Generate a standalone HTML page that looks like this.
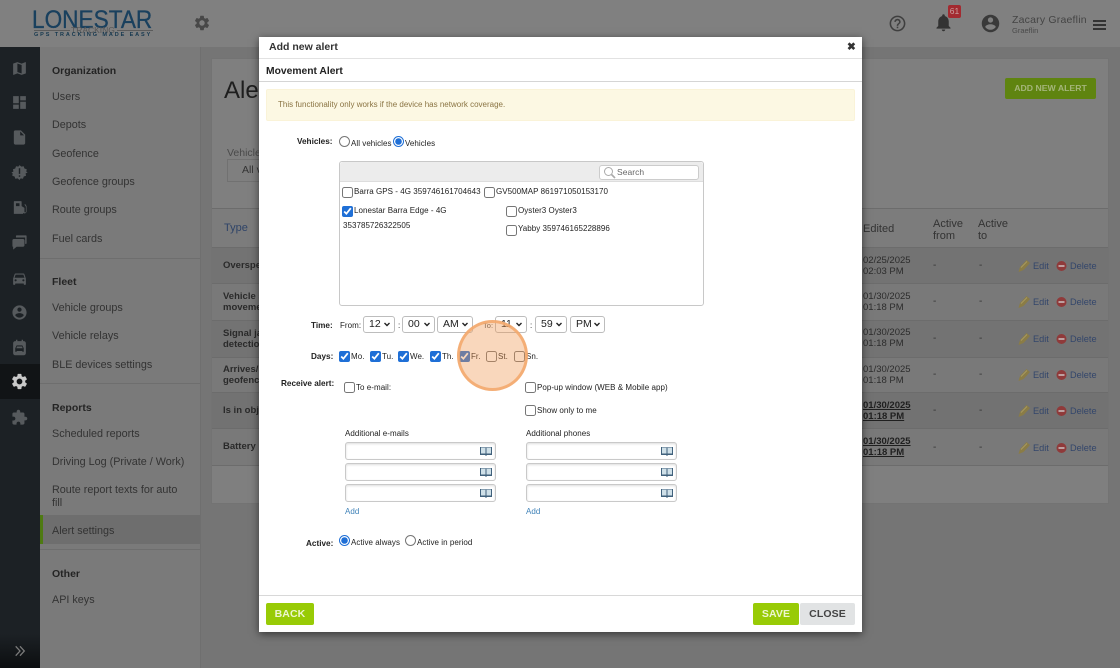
<!DOCTYPE html>
<html><head><meta charset="utf-8"><style>
html,body{margin:0;padding:0}
body{width:1120px;height:668px;position:relative;overflow:hidden;background:#757575;font-family:"Liberation Sans",sans-serif;color:#111}
div,span,input,svg,a{position:absolute}
.t{white-space:nowrap;line-height:1}
.nav{left:52px;font-size:10.8px;color:#333;white-space:nowrap;line-height:14px;margin-top:1px}
.navh{left:52px;font-size:10.5px;font-weight:bold;color:#242424;white-space:nowrap;line-height:14px;margin-top:1px}
.hr{left:40px;width:160px;height:1px;background:#6e6e6e}
.rail{left:11px;width:17px;height:17px;fill:#565a5d;margin-top:2px}
.row{left:212px;width:896px;border-bottom:1px solid #6c6c6c}
.ty{left:223px;font-size:9.5px;font-weight:bold;color:#2a2a2a;line-height:10.5px;white-space:nowrap}
.ed{left:863px;font-size:9.5px;color:#2c2c2c;line-height:10.5px;white-space:nowrap}
.dash{font-size:10px;color:#333;white-space:nowrap;line-height:10px}
.lnk{font-size:9.2px;color:#33466b;white-space:nowrap;line-height:10px}
.f{font-size:8px;letter-spacing:.04px;color:#222;white-space:nowrap;line-height:10px;margin-top:1px}
.b{font-weight:bold;color:#222;font-size:8.2px;letter-spacing:0}
input[type=checkbox],input[type=radio]{margin:0;width:11px;height:11px;accent-color:#1f6fd6}
.sel{top:316px;height:15px;border:1px solid #bdbdbd;border-radius:3px;background:#fff;color:#222;font-size:10.5px;line-height:15px;padding-left:5px;white-space:nowrap}
.sel svg{right:4px;top:5px;width:6px;height:5px;fill:none;stroke:#222;stroke-width:1.4}
.in{width:149px;height:16px;border:1px solid #c9c9c9;border-radius:3px;background:#fff;box-shadow:inset 0 1px 2px #ddd}
.bk{width:12px;height:10px}
.btn{height:22px;border-radius:2px;font-size:10.5px;font-weight:bold;text-align:center;line-height:22px;letter-spacing:.1px}
.ac{width:80px;height:12px}
</style></head><body>
<!-- header -->
<div style="left:0;top:0;width:1120px;height:47px;background:#808080"></div>
<div class="t" style="left:32px;top:8px;font-size:25px;font-weight:normal;color:#19405e;transform-origin:0 0;transform:scaleX(.905);-webkit-text-stroke:.3px #19405e">LONESTAR</div>
<div style="left:34px;top:30px;width:36px;height:1px;background:#5b5b5b"></div>
<div style="left:117px;top:30px;width:36px;height:1px;background:#5b5b5b"></div>
<div class="t" style="left:71px;top:26px;font-size:8.5px;color:#555">TRACKING</div>
<div class="t" style="left:34px;top:33px;font-size:5.5px;font-weight:bold;color:#16384f;letter-spacing:1.9px">GPS TRACKING MADE EASY</div>
<svg style="left:193px;top:14px;width:18px;height:18px;fill:#484848" viewBox="0 0 24 24"><path d="M19.14 12.94c.04-.3.06-.61.06-.94 0-.32-.02-.64-.07-.94l2.03-1.58c.18-.14.23-.41.12-.61l-1.92-3.32c-.12-.22-.37-.29-.59-.22l-2.39.96c-.5-.38-1.03-.7-1.62-.94l-.36-2.54c-.04-.24-.24-.41-.48-.41h-3.84c-.24 0-.43.17-.47.41l-.36 2.54c-.59.24-1.13.57-1.62.94l-2.39-.96c-.22-.08-.47 0-.59.22L2.74 8.87c-.12.21-.08.47.12.61l2.03 1.58c-.05.3-.09.63-.09.94s.02.64.07.94l-2.03 1.58c-.18.14-.23.41-.12.61l1.92 3.32c.12.22.37.29.59.22l2.39-.96c.5.38 1.03.7 1.62.94l.36 2.54c.05.24.24.41.48.41h3.84c.24 0 .44-.17.47-.41l.36-2.54c.59-.24 1.13-.56 1.62-.94l2.39.96c.22.08.47 0 .59-.22l1.92-3.32c.12-.22.07-.47-.12-.61l-2.01-1.58zM12 15.6c-1.98 0-3.6-1.62-3.6-3.6s1.62-3.6 3.6-3.6 3.6 1.62 3.6 3.6-1.62 3.6-3.6 3.6z"/></svg>
<svg style="left:888px;top:14px;width:19px;height:19px;fill:#3f3f3f" viewBox="0 0 24 24"><path d="M11 18h2v-2h-2v2zm1-16C6.48 2 2 6.48 2 12s4.48 10 10 10 10-4.48 10-10S17.52 2 12 2zm0 18c-4.41 0-8-3.59-8-8s3.59-8 8-8 8 3.59 8 8-3.59 8-8 8zm0-14c-2.21 0-4 1.79-4 4h2c0-1.1.9-2 2-2s2 .9 2 2c0 2-3 1.75-3 5h2c0-2.25 3-2.5 3-5 0-2.21-1.79-4-4-4z"/></svg>
<svg style="left:933px;top:12px;width:21px;height:21px;fill:#333" viewBox="0 0 24 24"><path d="M12 22c1.1 0 2-.9 2-2h-4c0 1.1.89 2 2 2zm6-6v-5c0-3.07-1.64-5.64-4.5-6.32V4c0-.83-.67-1.5-1.5-1.5s-1.5.67-1.5 1.5v.68C7.63 5.36 6 7.92 6 11v5l-2 2v1h16v-1l-2-2z"/></svg>
<div style="left:948px;top:5px;width:13px;height:13px;background:#a32a30;border-radius:2px;color:#c9a0a0;font-size:8.5px;text-align:center;line-height:13px">61</div>
<svg style="left:980px;top:13px;width:21px;height:21px;fill:#3a3a3a" viewBox="0 0 24 24"><path d="M12 2C6.48 2 2 6.48 2 12s4.48 10 10 10 10-4.48 10-10S17.52 2 12 2zm0 3c1.66 0 3 1.34 3 3s-1.34 3-3 3-3-1.34-3-3 1.34-3 3-3zm0 14.2c-2.5 0-4.71-1.28-6-3.22.03-1.99 4-3.08 6-3.08 1.99 0 5.97 1.09 6 3.08-1.29 1.94-3.5 3.22-6 3.22z"/></svg>
<div class="t" style="left:1012px;top:15px;font-size:10.5px;color:#444;letter-spacing:.2px">Zacary Graeflin</div>
<div class="t" style="left:1012px;top:27px;font-size:7.5px;color:#4a4a4a">Graeflin</div>
<div style="left:1093px;top:20px;width:13px;height:1.5px;background:#333"></div>
<div style="left:1093px;top:24px;width:13px;height:1.5px;background:#333"></div>
<div style="left:1093px;top:28px;width:13px;height:1.5px;background:#333"></div>
<!-- rail -->
<div style="left:0;top:47px;width:40px;height:621px;background:#1c2125"></div>
<div style="left:0;top:364px;width:40px;height:35px;background:#111416"></div>
<div style="left:0;top:634px;width:40px;height:34px;background:linear-gradient(#1c2125,#0c0e10)"></div>
<svg class="rail" style="top:58px" viewBox="0 0 24 24"><path d="M20.5 3l-.16.03L15 5.1 9 3 3.36 4.9c-.21.07-.36.25-.36.48V20.5c0 .28.22.5.5.5l.16-.03L9 18.9l6 2.1 5.64-1.9c.21-.07.36-.25.36-.48V3.5c0-.28-.22-.5-.5-.5zM15 19l-6-2.11V5l6 2.11V19z"/></svg>
<svg class="rail" style="top:92px" viewBox="0 0 24 24"><path d="M3 13h8V3H3v10zm0 8h8v-6H3v6zm10 0h8V11h-8v10zm0-18v6h8V3h-8z"/></svg>
<svg class="rail" style="top:127px" viewBox="0 0 24 24"><path d="M14 2H6c-1.1 0-2 .9-2 2v16c0 1.1.9 2 2 2h12c1.1 0 2-.9 2-2V8l-6-6zm-1 7V3.5L18.5 9H13z"/></svg>
<svg class="rail" style="top:162px" viewBox="0 0 24 24"><path fill-rule="evenodd" d="M12 1.5l2.6 2.2 3.3-.6 1.1 3.2 3.2 1.1-.6 3.3L23.5 12l-2.9 1.3.6 3.3-3.2 1.1-1.1 3.2-3.3-.6L12 22.500l-2.6-2.2-3.3.6-1.1-3.2-3.2-1.1.6-3.3L.5 12l2.9-1.3-.6-3.3 3.2-1.1 1.1-3.2 3.3.6zM11 6v8h2V6zm0 10v2h2v-2z"/></svg>
<svg class="rail" style="top:197px" viewBox="0 0 24 24"><path fill-rule="evenodd" d="M5 3h9c.6 0 1 .4 1 1v6l4 2.5V18a1 1 0 0 0 2 0v-7l-2-3 1-1 2 3v8a3 3 0 0 1-5 1.5V21H4V4c0-.6.4-1 1-1zm2 3v4h5V6z"/></svg>
<svg class="rail" style="top:232px" viewBox="0 0 24 24"><path d="M8 2h13c.6 0 1 .4 1 1v10c0 .6-.4 1-1 1h-1V5H7V3c0-.6.4-1 1-1zM4 7h13c1 0 2 .8 2 2v7c0 1-1 2-2 2H8l-5 4v-4c-1 0-1-.8-1-2V9c0-1.200.9-2 2-2z"/></svg>
<svg class="rail" style="top:268px" viewBox="0 0 24 24"><path d="M18.920 6.010C18.720 5.420 18.160 5 17.500 5h-11c-.66 0-1.210.42-1.420 1.010L3 12v8c0 .55.45 1 1 1h1c.55 0 1-.45 1-1v-1h12v1c0 .55.45 1 1 1h1c.55 0 1-.45 1-1v-8l-2.080-5.990zM6.500 16c-.83 0-1.500-.67-1.500-1.500S5.670 13 6.500 13s1.500.67 1.500 1.500S7.330 16 6.500 16zm11 0c-.83 0-1.500-.67-1.500-1.500s.67-1.500 1.500-1.500 1.500.67 1.500 1.500-.67 1.500-1.500 1.500zM5 11l1.500-4.500h11L19 11H5z"/></svg>
<svg class="rail" style="top:302px" viewBox="0 0 24 24"><path d="M12 2C6.480 2 2 6.480 2 12s4.480 10 10 10 10-4.480 10-10S17.520 2 12 2zm0 3c1.660 0 3 1.340 3 3s-1.340 3-3 3-3-1.340-3-3 1.340-3 3-3zm0 14.200c-2.500 0-4.710-1.280-6-3.220.03-1.990 4-3.080 6-3.080 1.990 0 5.970 1.090 6 3.080-1.290 1.940-3.500 3.220-6 3.220z"/></svg>
<svg class="rail" style="top:337px" viewBox="0 0 24 24"><path fill-rule="evenodd" d="M7 1h2v2h6V1h2v2h1c1.700 0 3 1.300 3 3v14c0 1.700-1.300 3-3 3H6c-1.700 0-3-1.300-3-3V6c0-1.700 1.300-3 3-3h1zM8 9l-2 4v5h2v-1h8v1h2v-5l-2-4zm.500 1.500h7l1 2.500h-9z"/></svg>
<svg style="left:10px;top:372px;width:19px;height:19px;fill:#c9c9c9" viewBox="0 0 24 24"><path d="M19.140 12.940c.04-.3.06-.61.06-.94 0-.32-.02-.64-.07-.94l2.030-1.580c.18-.14.23-.41.12-.61l-1.920-3.320c-.12-.22-.37-.29-.59-.22l-2.390.96c-.5-.38-1.030-.7-1.620-.94l-.36-2.540c-.04-.24-.24-.41-.48-.41h-3.840c-.24 0-.43.17-.47.41l-.36 2.540c-.59.24-1.130.57-1.620.94l-2.390-.96c-.22-.08-.47 0-.59.22L2.740 8.870c-.12.21-.08.47.12.61l2.030 1.580c-.05.3-.09.63-.09.94s.02.64.07.94l-2.030 1.580c-.18.14-.23.41-.12.61l1.920 3.320c.12.22.37.29.59.22l2.390-.96c.5.38 1.030.7 1.620.94l.36 2.54c.05.24.24.41.48.41h3.840c.24 0 .44-.17.47-.41l.36-2.54c.59-.24 1.130-.56 1.620-.94l2.390.96c.22.08.47 0 .59-.22l1.920-3.320c.12-.22.07-.47-.12-.61l-2.010-1.580zM12 15.600c-1.980 0-3.600-1.620-3.600-3.600s1.620-3.600 3.600-3.600 3.600 1.620 3.600 3.600-1.620 3.600-3.600 3.600z"/></svg>
<svg class="rail" style="top:407px" viewBox="0 0 24 24"><path d="M20.500 11H19V7c0-1.100-.9-2-2-2h-4V3.500C13 2.120 11.880 1 10.500 1S8 2.120 8 3.500V5H4c-1.100 0-1.990.9-1.990 2v3.800H3.500c1.490 0 2.700 1.210 2.700 2.700s-1.210 2.700-2.700 2.700H2V20c0 1.100.9 2 2 2h3.800v-1.500c0-1.490 1.210-2.700 2.700-2.700 1.490 0 2.700 1.210 2.700 2.700V22H17c1.100 0 2-.9 2-2v-4h1.500c1.380 0 2.500-1.120 2.500-2.500S21.880 11 20.500 11z"/></svg>
<svg style="left:14px;top:645px;width:12px;height:12px;fill:none;stroke:#7c7c7c;stroke-width:1.500" viewBox="0 0 14 13"><path d="M2 1l5 5.500L2 12M7 1l5 5.500L7 12"/></svg>
<!-- side panel -->
<div style="left:40px;top:47px;width:160px;height:621px;background:#7a7a7a"></div>
<div style="left:200px;top:47px;width:1px;height:621px;background:#6f6f6f"></div>
<div class="navh" style="top:63px">Organization</div>
<div class="nav" style="top:89px">Users</div>
<div class="nav" style="top:117px">Depots</div>
<div class="nav" style="top:146px">Geofence</div>
<div class="nav" style="top:174px">Geofence groups</div>
<div class="nav" style="top:202px">Route groups</div>
<div class="nav" style="top:231px">Fuel cards</div>
<div class="hr" style="top:258px"></div>
<div class="navh" style="top:274px">Fleet</div>
<div class="nav" style="top:300px">Vehicle groups</div>
<div class="nav" style="top:328px">Vehicle relays</div>
<div class="nav" style="top:357px">BLE devices settings</div>
<div class="hr" style="top:383px"></div>
<div class="navh" style="top:400px">Reports</div>
<div class="nav" style="top:426px">Scheduled reports</div>
<div class="nav" style="top:454px">Driving Log (Private / Work)</div>
<div class="nav" style="top:483px;line-height:12.500px">Route report texts for auto<br>fill</div>
<div style="left:40px;top:515px;width:160px;height:29px;background:#6e6e6e"></div>
<div style="left:40px;top:515px;width:3px;height:29px;background:#4e7a12"></div>
<div class="nav" style="top:523px">Alert settings</div>
<div class="hr" style="top:549px"></div>
<div class="navh" style="top:566px">Other</div>
<div class="nav" style="top:592px">API keys</div>
<!-- main card -->
<div style="left:212px;top:59px;width:896px;height:444px;background:#7f7f7f;box-shadow:0 0 0 1px #737373"></div>
<div class="t" style="left:224px;top:79px;font-size:24px;color:#1e1e1e">Alert settings</div>
<div class="t" style="left:227px;top:148px;font-size:10.500px;color:#4a4a4a">Vehicle</div>
<div style="left:227px;top:159px;width:50px;height:21px;border:1px solid #717171"></div>
<div class="t" style="left:242px;top:165px;font-size:10.500px;color:#333">All vehicles</div>
<div class="btn" style="left:1005px;top:78px;width:91px;background:#5f8410;color:#a4b57a;line-height:21px;height:21px;font-size:8.700px;letter-spacing:0">ADD NEW ALERT</div>
<div style="left:212px;top:208px;width:896px;height:40px;background:#7c7c7c;border-top:1px solid #6c6c6c;border-bottom:1px solid #6c6c6c;box-sizing:border-box"></div>
<div class="t" style="left:224px;top:223px;font-size:11px;color:#2f4468">Type</div>
<div class="t" style="left:863px;top:224px;font-size:11px;color:#333">Edited</div>
<div class="t" style="left:933px;top:218px;font-size:11px;color:#333;line-height:12px">Active<br>from</div>
<div class="t" style="left:978px;top:218px;font-size:11px;color:#333;line-height:12px">Active<br>to</div>
<div class="row" style="top:248px;height:35px;background:#737373"></div>
<div class="row" style="top:284px;height:36px;background:#797979"></div>
<div class="row" style="top:321px;height:36px;background:#737373"></div>
<div class="row" style="top:358px;height:34px;background:#797979"></div>
<div class="row" style="top:393px;height:35px;background:#727272"></div>
<div class="row" style="top:429px;height:36px;background:#797979"></div>
<div class="ty" style="top:261px">Overspeed</div>
<div class="ty" style="top:292px">Vehicle start<br>movement</div>
<div class="ty" style="top:329px">Signal jamming<br>detection</div>
<div class="ty" style="top:365px">Arrives/leaves<br>geofence</div>
<div class="ty" style="top:406px">Is in object</div>
<div class="ty" style="top:442px">Battery low</div>
<div class="ed" style="top:256px">02/25/2025<br>02:03 PM</div>
<div class="ed" style="top:292px">01/30/2025<br>01:18 PM</div>
<div class="ed" style="top:328px">01/30/2025<br>01:18 PM</div>
<div class="ed" style="top:365px">01/30/2025<br>01:18 PM</div>
<div class="ed" style="top:401px;font-weight:bold;text-decoration:underline;color:#1f1f1f">01/30/2025<br>01:18 PM</div>
<div class="ed" style="top:437px;font-weight:bold;text-decoration:underline;color:#1f1f1f">01/30/2025<br>01:18 PM</div>
<div class="dash" style="left:933px;top:261px">-</div><div class="dash" style="left:979px;top:261px">-</div>
<div class="dash" style="left:933px;top:297px">-</div><div class="dash" style="left:979px;top:297px">-</div>
<div class="dash" style="left:933px;top:334px">-</div><div class="dash" style="left:979px;top:334px">-</div>
<div class="dash" style="left:933px;top:370px">-</div><div class="dash" style="left:979px;top:370px">-</div>
<div class="dash" style="left:933px;top:406px">-</div><div class="dash" style="left:979px;top:406px">-</div>
<div class="dash" style="left:933px;top:443px">-</div><div class="dash" style="left:979px;top:443px">-</div>
<svg class="ac" style="left:1018px;top:260px" viewBox="0 0 80 12"><path d="M.5 12l1.500-5L8.500 0l3.500 3L5.500 10z" fill="#8a7c46"/><path d="M3 7.500l6-6" stroke="#a89a62" fill="none"/><circle cx="43.500" cy="6" r="5" fill="#8f3a3a"/><rect x="40.500" y="5" width="6" height="2" fill="#bda0a0"/></svg>
<svg class="ac" style="left:1018px;top:296px" viewBox="0 0 80 12"><path d="M.5 12l1.500-5L8.500 0l3.500 3L5.500 10z" fill="#8a7c46"/><path d="M3 7.500l6-6" stroke="#a89a62" fill="none"/><circle cx="43.500" cy="6" r="5" fill="#8f3a3a"/><rect x="40.500" y="5" width="6" height="2" fill="#bda0a0"/></svg>
<svg class="ac" style="left:1018px;top:333px" viewBox="0 0 80 12"><path d="M.5 12l1.500-5L8.500 0l3.500 3L5.500 10z" fill="#8a7c46"/><path d="M3 7.500l6-6" stroke="#a89a62" fill="none"/><circle cx="43.500" cy="6" r="5" fill="#8f3a3a"/><rect x="40.500" y="5" width="6" height="2" fill="#bda0a0"/></svg>
<svg class="ac" style="left:1018px;top:369px" viewBox="0 0 80 12"><path d="M.5 12l1.500-5L8.500 0l3.500 3L5.500 10z" fill="#8a7c46"/><path d="M3 7.500l6-6" stroke="#a89a62" fill="none"/><circle cx="43.500" cy="6" r="5" fill="#8f3a3a"/><rect x="40.500" y="5" width="6" height="2" fill="#bda0a0"/></svg>
<svg class="ac" style="left:1018px;top:405px" viewBox="0 0 80 12"><path d="M.5 12l1.500-5L8.500 0l3.500 3L5.500 10z" fill="#8a7c46"/><path d="M3 7.500l6-6" stroke="#a89a62" fill="none"/><circle cx="43.500" cy="6" r="5" fill="#8f3a3a"/><rect x="40.500" y="5" width="6" height="2" fill="#bda0a0"/></svg>
<svg class="ac" style="left:1018px;top:442px" viewBox="0 0 80 12"><path d="M.5 12l1.500-5L8.500 0l3.500 3L5.500 10z" fill="#8a7c46"/><path d="M3 7.500l6-6" stroke="#a89a62" fill="none"/><circle cx="43.500" cy="6" r="5" fill="#8f3a3a"/><rect x="40.500" y="5" width="6" height="2" fill="#bda0a0"/></svg>
<div class="lnk" style="left:1033px;top:261px">Edit</div><div class="lnk" style="left:1070px;top:261px">Delete</div>
<div class="lnk" style="left:1033px;top:297px">Edit</div><div class="lnk" style="left:1070px;top:297px">Delete</div>
<div class="lnk" style="left:1033px;top:334px">Edit</div><div class="lnk" style="left:1070px;top:334px">Delete</div>
<div class="lnk" style="left:1033px;top:370px">Edit</div><div class="lnk" style="left:1070px;top:370px">Delete</div>
<div class="lnk" style="left:1033px;top:406px">Edit</div><div class="lnk" style="left:1070px;top:406px">Delete</div>
<div class="lnk" style="left:1033px;top:443px">Edit</div><div class="lnk" style="left:1070px;top:443px">Delete</div>
<!-- modal -->
<div style="left:259px;top:37px;width:603px;height:595px;background:#fff;box-shadow:0 2px 8px rgba(0,0,0,.55)"></div>
<div class="t" style="left:269px;top:42px;font-size:10.500px;font-weight:bold;color:#333">Add new alert</div>
<div class="t" style="left:847px;top:42px;font-size:10.500px;font-weight:bold;color:#333">✖</div>
<div style="left:259px;top:58px;width:603px;height:1px;background:#e2e2e2"></div>
<div class="t" style="left:266px;top:67px;font-size:10.300px;font-weight:bold;color:#222">Movement Alert</div>
<div style="left:259px;top:81px;width:603px;height:1px;background:#d5d5d5"></div>
<div style="left:266px;top:89px;width:589px;height:32px;background:#fcf8e3;border:1px solid #faf3d8;border-radius:2px;box-sizing:border-box"></div>
<div class="t" style="left:278px;top:101px;font-size:8px;color:#8a7443">This functionality only works if the device has network coverage.</div>
<div class="f b" style="left:297px;top:136px">Vehicles:</div>
<input type="radio" style="left:339px;top:136px">
<div class="f" style="left:351px;top:138px">All vehicles</div>
<input type="radio" checked style="left:393px;top:136px">
<div class="f" style="left:405px;top:138px">Vehicles</div>
<!-- list box -->
<div style="left:339px;top:161px;width:363px;height:143px;border:1px solid #c8c8c8;border-radius:3px;background:#fff"></div>
<div style="left:340px;top:162px;width:363px;height:19px;background:#ececec;border-bottom:1px solid #ddd;border-radius:3px 3px 0 0"></div>
<div style="left:599px;top:165px;width:98px;height:13px;background:#fff;border:1px solid #ccc;border-radius:3px"></div>
<svg style="left:603px;top:166px;width:13px;height:13px;fill:none;stroke:#aaa;stroke-width:1" viewBox="0 0 13 13"><circle cx="5.500" cy="5.500" r="4"/><path d="M8.500 8.500l3.500 3.500" stroke-width="1.600"/></svg>
<div class="f" style="left:617px;top:166px;color:#666;font-size:8.500px">Search</div>
<input type="checkbox" style="left:342px;top:187px">
<div class="f" style="left:354px;top:186px">Barra GPS - 4G 359746161704643</div>
<input type="checkbox" style="left:484px;top:187px">
<div class="f" style="left:496px;top:186px">GV500MAP 861971050153170</div>
<input type="checkbox" checked style="left:342px;top:206px">
<div class="f" style="left:354px;top:205px">Lonestar Barra Edge - 4G</div>
<div class="f" style="left:343px;top:220px">353785726322505</div>
<input type="checkbox" style="left:506px;top:206px">
<div class="f" style="left:518px;top:205px">Oyster3 Oyster3</div>
<input type="checkbox" style="left:506px;top:225px">
<div class="f" style="left:518px;top:223px">Yabby 359746165228896</div>
<!-- time -->
<div class="f b" style="left:311px;top:320px">Time:</div>
<div class="f" style="left:340px;top:320px">From:</div>
<div class="sel" style="left:363px;width:25px">12<svg viewBox="0 0 6 5"><path d="M.5 1l2.500 2.500L5.500 1"/></svg></div>
<div class="f" style="left:398px;top:320px">:</div>
<div class="sel" style="left:402px;width:26px">00<svg viewBox="0 0 6 5"><path d="M.5 1l2.500 2.500L5.500 1"/></svg></div>
<div class="sel" style="left:437px;width:29px">AM<svg viewBox="0 0 6 5"><path d="M.5 1l2.500 2.500L5.500 1"/></svg></div>
<div class="f" style="left:483px;top:320px;font-size:7.500px;color:#555">To:</div>
<div class="sel" style="left:495px;width:25px">11<svg viewBox="0 0 6 5"><path d="M.5 1l2.500 2.500L5.500 1"/></svg></div>
<div class="f" style="left:530px;top:320px">:</div>
<div class="sel" style="left:535px;width:25px">59<svg viewBox="0 0 6 5"><path d="M.5 1l2.500 2.500L5.500 1"/></svg></div>
<div class="sel" style="left:570px;width:28px">PM<svg viewBox="0 0 6 5"><path d="M.5 1l2.500 2.500L5.500 1"/></svg></div>
<!-- days -->
<div class="f b" style="left:311px;top:351px">Days:</div>
<input type="checkbox" checked style="left:339px;top:351px"><div class="f" style="left:351px;top:351px">Mo.</div>
<input type="checkbox" checked style="left:370px;top:351px"><div class="f" style="left:382px;top:351px">Tu.</div>
<input type="checkbox" checked style="left:398px;top:351px"><div class="f" style="left:410px;top:351px">We.</div>
<input type="checkbox" checked style="left:430px;top:351px"><div class="f" style="left:442px;top:351px">Th.</div>
<input type="checkbox" checked style="left:459px;top:351px"><div class="f" style="left:471px;top:351px">Fr.</div>
<input type="checkbox" style="left:486px;top:351px"><div class="f" style="left:498px;top:351px">St.</div>
<input type="checkbox" style="left:514px;top:351px"><div class="f" style="left:526px;top:351px">Sn.</div>
<div style="left:457px;top:320px;width:71px;height:71px;border-radius:50%;box-sizing:border-box;background:rgba(240,150,80,.38);border:3px solid rgba(243,170,110,.9)"></div>
<div class="f b" style="left:281px;top:378px">Receive alert:</div>
<input type="checkbox" style="left:344px;top:382px"><div class="f" style="left:356px;top:382px">To e-mail:</div>
<input type="checkbox" style="left:525px;top:382px"><div class="f" style="left:537px;top:382px">Pop-up window (WEB &amp; Mobile app)</div>
<input type="checkbox" style="left:525px;top:405px"><div class="f" style="left:537px;top:405px">Show only to me</div>
<div class="f" style="left:345px;top:428px">Additional e-mails</div>
<div class="f" style="left:526px;top:428px">Additional phones</div>
<div class="in" style="left:345px;top:442px"></div>
<div class="in" style="left:345px;top:463px"></div>
<div class="in" style="left:345px;top:484px"></div>
<div class="in" style="left:526px;top:442px"></div>
<div class="in" style="left:526px;top:463px"></div>
<div class="in" style="left:526px;top:484px"></div>
<svg class="bk" style="left:480px;top:446px" viewBox="0 0 12 10"><path d="M0 1h5.500l.5.500.5-.5H12v8H7l-1 1-1-1H0z" fill="#40617c"/><path d="M1 1.500h4.500v6H1zM6.500 1.500H11v6H6.500z" fill="#cfe0e8"/></svg>
<svg class="bk" style="left:480px;top:467px" viewBox="0 0 12 10"><path d="M0 1h5.500l.5.500.5-.5H12v8H7l-1 1-1-1H0z" fill="#40617c"/><path d="M1 1.500h4.500v6H1zM6.500 1.500H11v6H6.500z" fill="#cfe0e8"/></svg>
<svg class="bk" style="left:480px;top:488px" viewBox="0 0 12 10"><path d="M0 1h5.500l.5.500.5-.5H12v8H7l-1 1-1-1H0z" fill="#40617c"/><path d="M1 1.500h4.500v6H1zM6.500 1.500H11v6H6.500z" fill="#cfe0e8"/></svg>
<svg class="bk" style="left:661px;top:446px" viewBox="0 0 12 10"><path d="M0 1h5.500l.5.500.5-.5H12v8H7l-1 1-1-1H0z" fill="#40617c"/><path d="M1 1.500h4.500v6H1zM6.500 1.500H11v6H6.500z" fill="#cfe0e8"/></svg>
<svg class="bk" style="left:661px;top:467px" viewBox="0 0 12 10"><path d="M0 1h5.500l.5.500.5-.5H12v8H7l-1 1-1-1H0z" fill="#40617c"/><path d="M1 1.500h4.500v6H1zM6.500 1.500H11v6H6.500z" fill="#cfe0e8"/></svg>
<svg class="bk" style="left:661px;top:488px" viewBox="0 0 12 10"><path d="M0 1h5.500l.5.500.5-.5H12v8H7l-1 1-1-1H0z" fill="#40617c"/><path d="M1 1.500h4.500v6H1zM6.500 1.500H11v6H6.500z" fill="#cfe0e8"/></svg>
<div class="f" style="left:345px;top:506px;color:#3f82b8">Add</div>
<div class="f" style="left:526px;top:506px;color:#3f82b8">Add</div>
<div class="f b" style="left:306px;top:538px">Active:</div>
<input type="radio" checked style="left:339px;top:535px"><div class="f" style="left:351px;top:537px">Active always</div>
<input type="radio" style="left:405px;top:535px"><div class="f" style="left:417px;top:537px">Active in period</div>
<!-- footer -->
<div style="left:259px;top:595px;width:603px;height:1px;background:#d8d8d8"></div>
<div class="btn" style="left:266px;top:603px;width:48px;background:#98cb06;color:#edf6d0">BACK</div>
<div class="btn" style="left:753px;top:603px;width:46px;background:#98cb06;color:#edf6d0">SAVE</div>
<div class="btn" style="left:800px;top:603px;width:55px;background:#e1e3e4;color:#444">CLOSE</div>
</body></html>
